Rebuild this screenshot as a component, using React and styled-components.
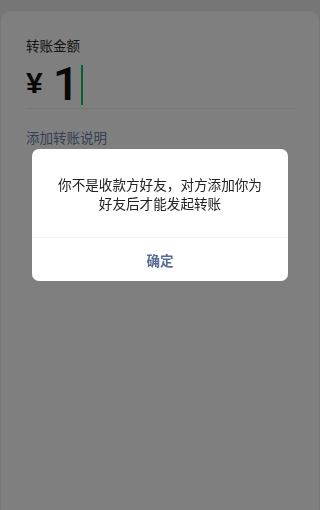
import React from "react";
import styled, { createGlobalStyle } from "styled-components";

const GlobalStyle = createGlobalStyle`
  html, body {
    margin: 0;
    padding: 0;
    background: #ededed;
    font-family: "Noto Sans CJK SC", "Noto Sans", sans-serif;
  }
`;

const Page = styled.div`
  height: 510px;
  padding-top: 11px;
  box-sizing: border-box;
  overflow: hidden;
`;

const Card = styled.div`
  margin: 0 1px;
  height: 100%;
  background: #fff;
  border-radius: 10px 10px 0 0;
  padding: 25px 24px 0 25px;
  box-sizing: border-box;
`;

const Label = styled.div`
  font-size: 13.5px;
  line-height: 18px;
  color: #2a2a2a;
`;

const AmountRow = styled.div`
  display: flex;
  align-items: center;
  height: 46px;
  margin-top: 6px;
  padding-bottom: 2px;
  border-bottom: 1px solid #eeeeee;
`;

const Currency = styled.span`
  font-family: "Liberation Sans", Arial, sans-serif;
  font-size: 30px;
  font-weight: 700;
  color: #111;
  margin-right: 10px;
  line-height: 1;
`;

const Amount = styled.span`
  font-family: Roboto, "Liberation Sans", sans-serif;
  font-size: 47px;
  font-weight: 500;
  color: #111;
  line-height: 1;
`;

const Cursor = styled.span`
  width: 2px;
  height: 40px;
  background: #07c160;
  margin-left: 2px;
  margin-top: 3px;
`;

const Remark = styled.div`
  margin-top: 19px;
  font-size: 13.5px;
  line-height: 18px;
  color: #6d7fa6;
`;

const Mask = styled.div`
  position: fixed;
  inset: 0;
  background: rgba(0, 0, 0, 0.5);
  display: flex;
  flex-direction: column;
  align-items: center;
  padding-top: 149px;
`;

const Dialog = styled.div`
  width: 256px;
  background: #fff;
  border-radius: 7px;
  overflow: hidden;
`;

const DialogBody = styled.div`
  padding: 26px 20px 25px;
  font-size: 13.6px;
  line-height: 18.5px;
  color: #222;
  text-align: center;
  border-bottom: 1px solid #f2f2f2;
`;

const DialogButton = styled.button`
  display: block;
  width: 100%;
  height: 43px;
  border: none;
  background: transparent;
  font-family: inherit;
  font-size: 13.5px;
  font-weight: 700;
  color: #576b95;
  padding: 0;
`;

export default function App() {
  return (
    <>
      <GlobalStyle />
      <Page>
        <Card>
          <Label>转账金额</Label>
          <AmountRow>
            <Currency>¥</Currency>
            <Amount>1</Amount>
            <Cursor />
          </AmountRow>
          <Remark>添加转账说明</Remark>
        </Card>
      </Page>
      <Mask>
        <Dialog>
          <DialogBody>
            你不是收款方好友，对方添加你为
            <br />
            好友后才能发起转账
          </DialogBody>
          <DialogButton>确定</DialogButton>
        </Dialog>
      </Mask>
    </>
  );
}
